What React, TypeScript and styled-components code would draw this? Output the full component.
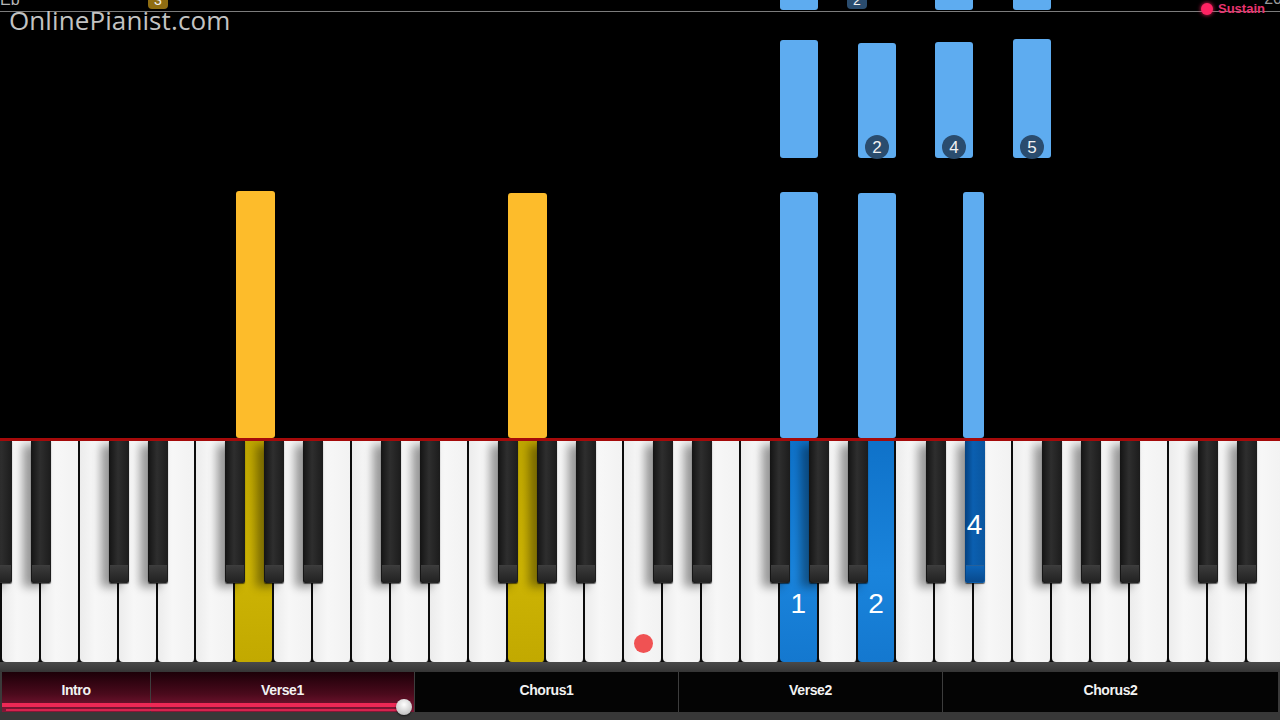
import React from 'react'
import styled, { createGlobalStyle, css } from 'styled-components'

const GlobalStyle = createGlobalStyle`
  html, body {
    margin: 0;
    padding: 0;
    background: #000;
  }
  body {
    font-family: "Liberation Sans", Arial, sans-serif;
  }
`

type Tone = 'blue' | 'yellow'

type Note = {
  x: number
  y: number
  w: number
  h: number
  tone: Tone
  finger?: number
}

// falling notes, coordinates are the place on the roll
const notes: Note[] = [
  { x: 780, y: -20, w: 38, h: 30, tone: 'blue' },
  { x: 935, y: -20, w: 38, h: 30, tone: 'blue' },
  { x: 1013, y: -20, w: 38, h: 30, tone: 'blue' },
  { x: 780, y: 40, w: 38, h: 118, tone: 'blue' },
  { x: 858, y: 43, w: 38, h: 115, tone: 'blue', finger: 2 },
  { x: 935, y: 42, w: 38, h: 116, tone: 'blue', finger: 4 },
  { x: 1013, y: 39, w: 38, h: 119, tone: 'blue', finger: 5 },
  { x: 236, y: 191, w: 39, h: 247, tone: 'yellow' },
  { x: 508, y: 193, w: 39, h: 245, tone: 'yellow' },
  { x: 780, y: 192, w: 38, h: 246, tone: 'blue' },
  { x: 858, y: 193, w: 38, h: 245, tone: 'blue' },
  { x: 963, y: 192, w: 21, h: 246, tone: 'blue' }
]

const KEY_W = 38.9
const FIRST_KEY = -1
const LAST_KEY = 32

type Lit = { tone: Tone; finger?: number }

const litWhite: Record<number, Lit> = {
  6: { tone: 'yellow' },
  13: { tone: 'yellow' },
  20: { tone: 'blue', finger: 1 },
  22: { tone: 'blue', finger: 2 }
}

const litBlack: Record<number, Lit> = {
  25: { tone: 'blue', finger: 4 }
}

type Section = { name: string; width: number; played?: boolean }

const sections: Section[] = [
  { name: 'Intro', width: 148, played: true },
  { name: 'Verse1', width: 264, played: true },
  { name: 'Chorus1', width: 264 },
  { name: 'Verse2', width: 264 },
  { name: 'Chorus2', width: 336 }
]

const Stage = styled.div`
  width: 1280px;
  height: 720px;
  display: flex;
  flex-direction: column;
  overflow: hidden;
  background: #000;
`

const Roll = styled.div`
  position: relative;
  height: 438px;
  flex: 0 0 auto;
  overflow: hidden;
  background: #000;
`

const TopRule = styled.div`
  position: absolute;
  top: 11px;
  left: 0;
  right: 0;
  height: 1px;
  background: #7c7c7c;
`

const ChordName = styled.div`
  position: absolute;
  top: -9px;
  left: 0;
  font-size: 16px;
  color: #b5b5b5;
`

const BarCount = styled.div`
  position: absolute;
  top: -10px;
  right: -2px;
  font-size: 16px;
  color: #9a9a9a;
`

const Watermark = styled.div`
  position: absolute;
  top: 2px;
  left: 9px;
  font-family: "Open Sans", "Liberation Sans", sans-serif;
  font-size: 26px;
  letter-spacing: 0.1px;
  color: #d4d4d4;
  opacity: 0.92;
`

const toneBar = {
  blue: '#5eacf0',
  yellow: '#fdbc2b'
}

const NoteBar = styled.div<{ $tone: Tone }>`
  position: absolute;
  display: flex;
  align-items: flex-end;
  justify-content: center;
  border-radius: 3px;
  background: ${p => toneBar[p.$tone]};
`

const Badge = styled.div<{ $tone?: Tone }>`
  width: 24px;
  height: 24px;
  margin-bottom: -1px;
  border-radius: 50%;
  display: flex;
  align-items: center;
  justify-content: center;
  background: ${p => (p.$tone === 'yellow' ? '#8f6d12' : '#2a4c6e')};
  color: #f2f2f2;
  font-family: "Liberation Sans", Arial, sans-serif;
  font-size: 17px;
  line-height: 1;
`

const LoneBadge = styled(Badge)`
  position: absolute;
  border-radius: 4px;
  width: 20px;
  height: 20px;
  top: -11px;
  font-size: 14px;
  align-items: flex-end;
  padding-bottom: 2px;
  box-sizing: border-box;
`

const Sustain = styled.div`
  position: absolute;
  top: 1px;
  left: 1201px;
  display: flex;
  align-items: center;
  gap: 5px;
  font-size: 13px;
  font-weight: bold;
  color: #e8336f;
`

const SustainDot = styled.span`
  width: 12px;
  height: 12px;
  border-radius: 50%;
  background: #ff2363;
  box-shadow: 0 0 4px #ff2363;
`

const RedLine = styled.div`
  height: 3px;
  flex: 0 0 auto;
  background: #a50a0a;
`

const Keyboard = styled.div`
  position: relative;
  height: 221px;
  flex: 0 0 auto;
  overflow: hidden;
  background: #0a0a0a;
`

const WhiteRow = styled.div`
  display: flex;
  height: 100%;
  margin-left: ${2 + FIRST_KEY * KEY_W}px;
`

const litWhiteBg = {
  blue: 'linear-gradient(#0f72c9, #1a84dc 60%, #1478cf)',
  yellow: 'linear-gradient(#bfa600, #cdb404 60%, #c2a900)'
}

const FingerLabel = styled.span`
  font-family: "Liberation Sans", Arial, sans-serif;
  font-size: 28px;
  line-height: 1;
  color: #fff;
`

const WhiteKey = styled.div<{ $lit?: Tone }>`
  flex: 0 0 ${KEY_W}px;
  box-sizing: border-box;
  border-right: 2px solid #0c0c0c;
  border-radius: 0 0 4px 4px;
  display: flex;
  flex-direction: column;
  align-items: center;
  justify-content: flex-end;
  padding-bottom: 44px;
  background: ${p =>
    p.$lit ? litWhiteBg[p.$lit] : 'linear-gradient(90deg, #ececec, #f7f7f7 40%, #f2f2f2)'};
`

const BlackKey = styled.div<{ $lit?: Tone }>`
  position: absolute;
  top: 0;
  width: 20px;
  height: 142px;
  box-sizing: border-box;
  border-radius: 0 0 2px 2px;
  display: flex;
  flex-direction: column;
  align-items: center;
  justify-content: flex-end;
  padding-bottom: 44px;
  box-shadow: -8px 4px 10px rgba(0, 0, 0, 0.38), 0 1px 1px rgba(0, 0, 0, 0.6);
  ${p =>
    p.$lit
      ? css`
          background: linear-gradient(90deg, #05417f, #0b5fb0 40%, #0a569f);
        `
      : css`
          background: linear-gradient(90deg, #141414, #2e2e2e 45%, #1c1c1c);
        `}

  &::after {
    content: '';
    position: absolute;
    left: 1px;
    right: 1px;
    bottom: 1px;
    height: 16px;
    border-radius: 0 0 2px 2px;
    border-top: 1px solid rgba(255, 255, 255, 0.12);
    background: ${p =>
      p.$lit ? 'linear-gradient(#0d63b6, #08498c)' : 'linear-gradient(#3b3b3b, #222)'};
  }
`

const PressDot = styled.div`
  position: absolute;
  left: 634px;
  top: 193px;
  width: 19px;
  height: 19px;
  border-radius: 50%;
  background: #f05253;
`

const Ledge = styled.div`
  height: 10px;
  flex: 0 0 auto;
  background: linear-gradient(#4a4a4a, #353535);
`

const SectionBar = styled.div`
  position: relative;
  height: 40px;
  flex: 0 0 auto;
  display: flex;
  padding: 0 2px;
  background: #3a3a3a;
`

const SectionCell = styled.div<{ $w: number; $played?: boolean }>`
  flex: 0 0 ${p => p.$w}px;
  box-sizing: border-box;
  display: flex;
  align-items: center;
  justify-content: center;
  padding-bottom: 4px;
  border-left: 1px solid #3d3d3d;
  font-family: "Liberation Sans Narrow", "Liberation Sans", Arial, sans-serif;
  font-weight: bold;
  font-size: 14px;
  letter-spacing: -0.4px;
  color: #f2f2f2;
  background: ${p =>
    p.$played ? 'linear-gradient(#1c0008, #4a0a1c 55%, #861838)' : '#040404'};

  &:first-child {
    border-left: none;
  }
`

const ProgressBand = styled.div`
  position: absolute;
  left: 2px;
  top: 31px;
  height: 4px;
  background: #ee2855;
`

const ProgressTrack = styled.div`
  position: absolute;
  left: 6px;
  top: 37px;
  height: 2px;
  background: #d8234e;
`

const Thumb = styled.div`
  position: absolute;
  top: 27px;
  width: 16px;
  height: 16px;
  border-radius: 50%;
  background: radial-gradient(circle at 50% 35%, #ffffff, #c9c9c9 70%, #9a9a9a);
  box-shadow: 0 1px 2px rgba(0, 0, 0, 0.6);
`

const BottomEdge = styled.div`
  flex: 1 1 auto;
  background: #383838;
`

const hasBlackAt = (boundary: number) => {
  const n = (((boundary - 1 - 2) % 7) + 7) % 7
  return n !== 2 && n !== 6
}

function App() {
  const whiteKeys: number[] = []
  for (let k = FIRST_KEY; k <= LAST_KEY; k++) whiteKeys.push(k)
  const blackKeys = whiteKeys.filter(b => b > FIRST_KEY && hasBlackAt(b))
  const progress = 404

  return (
    <Stage>
      <GlobalStyle />
      <Roll>
        <ChordName>Eb</ChordName>
        <BarCount>20</BarCount>
        {notes.map((n, i) => (
          <NoteBar
            key={i}
            $tone={n.tone}
            style={{ left: n.x, top: n.y, width: n.w, height: n.h }}
          >
            {n.finger && <Badge>{n.finger}</Badge>}
          </NoteBar>
        ))}
        <LoneBadge $tone="yellow" style={{ left: 148 }}>3</LoneBadge>
        <LoneBadge style={{ left: 847 }}>2</LoneBadge>
        <TopRule />
        <Watermark>OnlinePianist.com</Watermark>
        <Sustain>
          <SustainDot />
          Sustain
        </Sustain>
      </Roll>
      <RedLine />
      <Keyboard>
        <WhiteRow>
          {whiteKeys.map(k => (
            <WhiteKey key={k} $lit={litWhite[k]?.tone}>
              {litWhite[k]?.finger && <FingerLabel>{litWhite[k].finger}</FingerLabel>}
            </WhiteKey>
          ))}
        </WhiteRow>
        {blackKeys.map(b => (
          <BlackKey key={b} $lit={litBlack[b]?.tone} style={{ left: 2 + b * KEY_W - 10 }}>
            {litBlack[b]?.finger && <FingerLabel>{litBlack[b].finger}</FingerLabel>}
          </BlackKey>
        ))}
        <PressDot />
      </Keyboard>
      <Ledge />
      <SectionBar>
        {sections.map(s => (
          <SectionCell key={s.name} $w={s.width} $played={s.played}>
            {s.name}
          </SectionCell>
        ))}
        <ProgressBand style={{ width: progress - 2 }} />
        <ProgressTrack style={{ width: progress - 12 }} />
        <Thumb style={{ left: progress - 8 }} />
      </SectionBar>
      <BottomEdge />
    </Stage>
  )
}

export default App
